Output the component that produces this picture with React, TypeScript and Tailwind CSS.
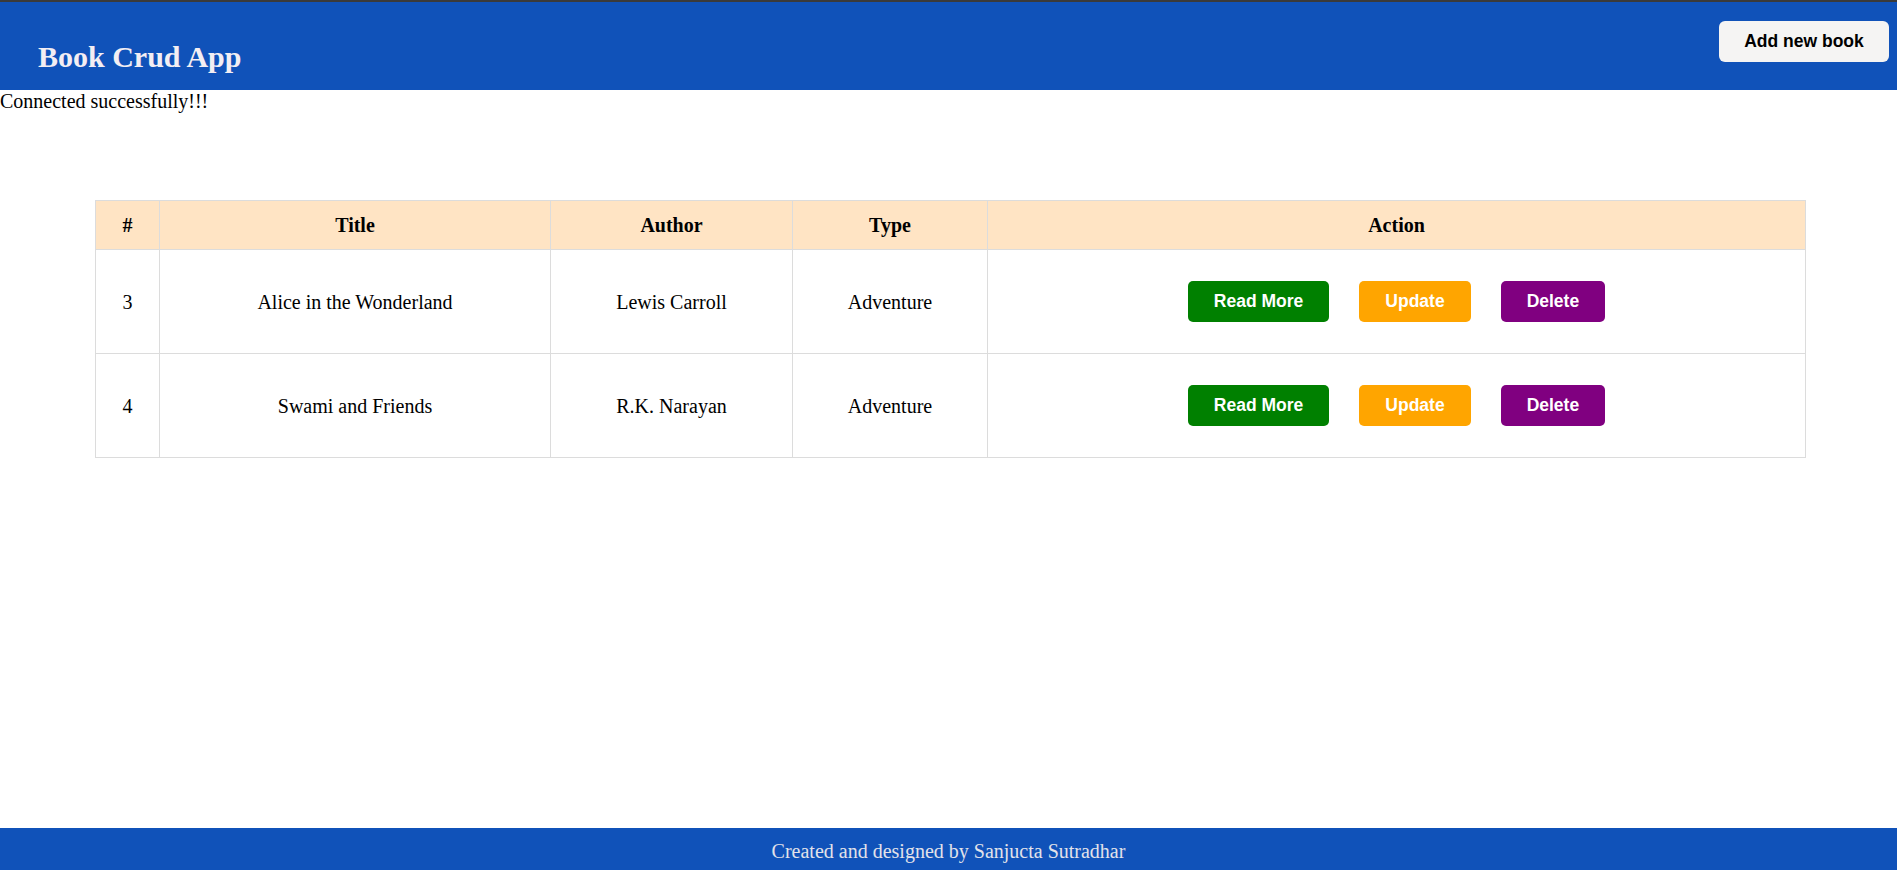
import React from "react";

type Book = { id: number; title: string; author: string; type: string };

const books: Book[] = [
  { id: 3, title: "Alice in the Wonderland", author: "Lewis Carroll", type: "Adventure" },
  { id: 4, title: "Swami and Friends", author: "R.K. Narayan", type: "Adventure" },
];

const serif = "font-['Liberation_Serif','Times_New_Roman',serif]";
const sans = "font-['Liberation_Sans',Arial,sans-serif]";

function ActionButton({ label, color }: { label: string; color: string }) {
  return (
    <button
      className={`${sans} ${color} h-[41px] px-[26px] mx-[15px] rounded-[5px] text-white text-[17.5px] font-bold leading-none`}
    >
      {label}
    </button>
  );
}

export default function App() {
  return (
    <div className={`${serif} h-screen flex flex-col bg-white text-black`}>
      {/* Header */}
      <header className="h-[90px] shrink-0 flex justify-between bg-[#1052b9] border-t-2 border-[#3a3a3a]">
        <h2 className="pl-[38px] mt-[38px] text-[30px] leading-[34px] font-bold text-[#f3eef3]">
          Book Crud App
        </h2>
        <button
          className={`${sans} mt-[19px] mr-[8px] w-[170px] h-[41px] rounded-[6px] bg-[#f5f4f3] text-black text-[17.5px] font-bold leading-none`}
        >
          Add new book
        </button>
      </header>

      {/* Content */}
      <main className="flex-1">
        <p className="text-[20px] leading-[23px]">Connected successfully!!!</p>

        <table className="mt-[87px] ml-[95px] w-[1711px] border-collapse text-[20px] text-center">
          <thead>
            <tr className="bg-[#ffe4c4] h-[49px]">
              <th className="border border-[#dcdcdc] w-[64px]">#</th>
              <th className="border border-[#dcdcdc] w-[391px]">Title</th>
              <th className="border border-[#dcdcdc] w-[242px]">Author</th>
              <th className="border border-[#dcdcdc] w-[195px]">Type</th>
              <th className="border border-[#dcdcdc]">Action</th>
            </tr>
          </thead>
          <tbody>
            {books.map((b) => (
              <tr key={b.id} className="h-[104px]">
                <td className="border border-[#dcdcdc]">{b.id}</td>
                <td className="border border-[#dcdcdc]">{b.title}</td>
                <td className="border border-[#dcdcdc]">{b.author}</td>
                <td className="border border-[#dcdcdc]">{b.type}</td>
                <td className="border border-[#dcdcdc]">
                  <div className="flex justify-center items-center">
                    <ActionButton label="Read More" color="bg-[#008000]" />
                    <ActionButton label="Update" color="bg-[#ffa500]" />
                    <ActionButton label="Delete" color="bg-[#800080]" />
                  </div>
                </td>
              </tr>
            ))}
          </tbody>
        </table>
      </main>

      {/* Footer */}
      <footer className="h-[42px] shrink-0 bg-[#1052b9] pt-[12px] text-center text-[20px] leading-[23px] text-[#e2e2ea]">
        Created and designed by Sanjucta Sutradhar
      </footer>
    </div>
  );
}
